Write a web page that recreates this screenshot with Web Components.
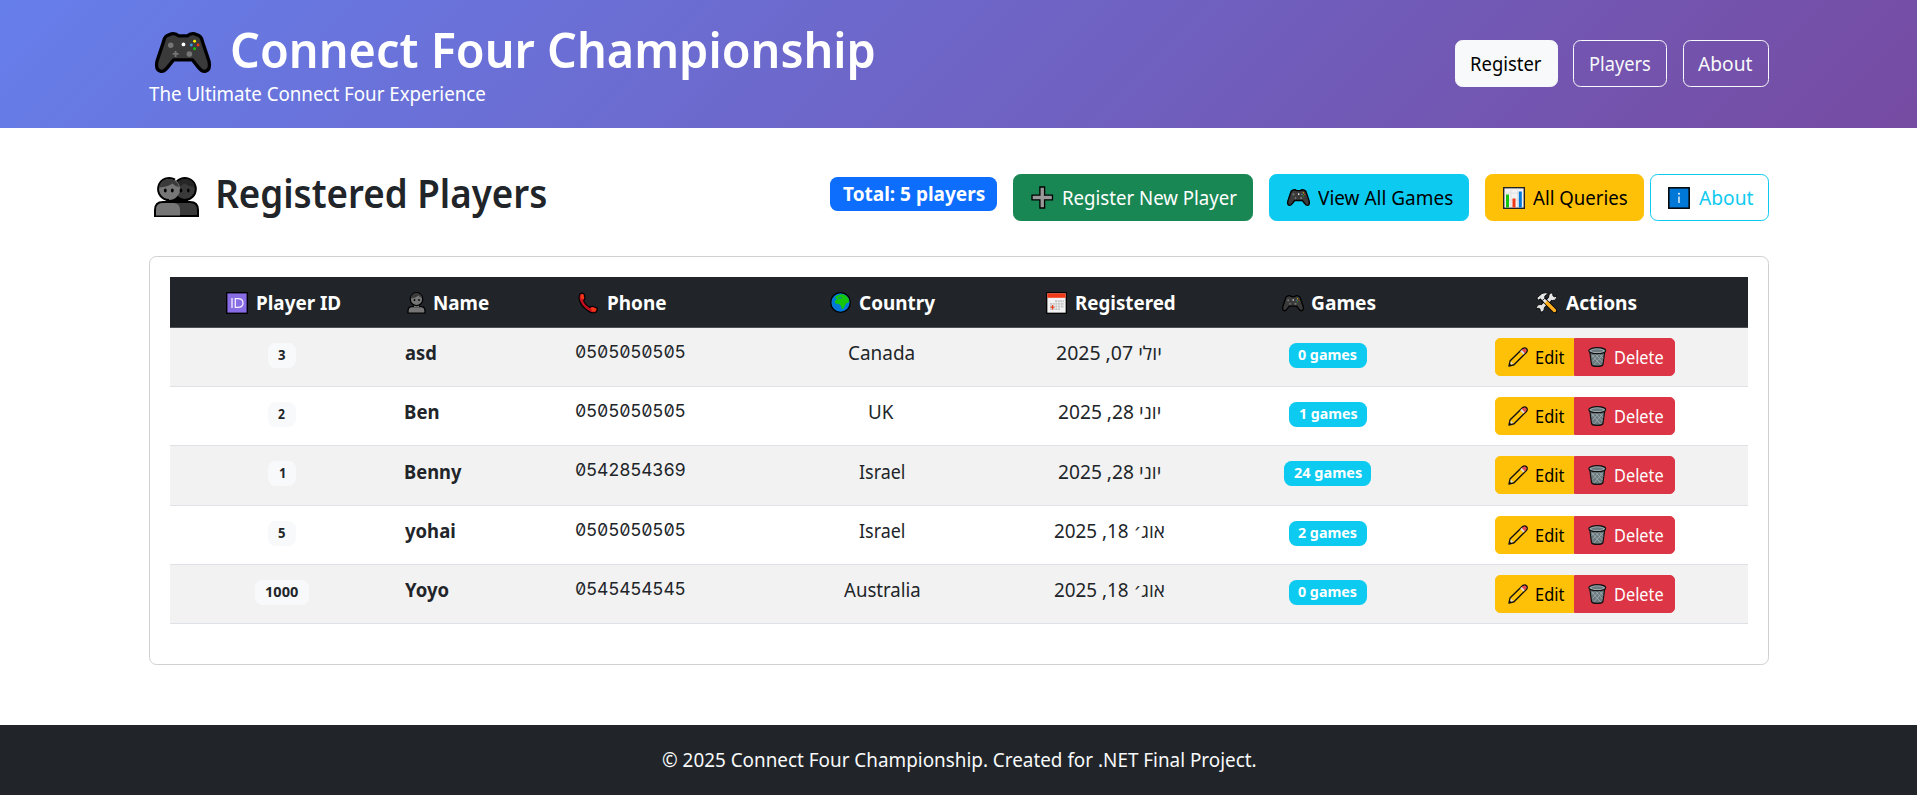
<!DOCTYPE html>
<html lang="en">
<head>
<meta charset="utf-8">
<title>Registered Players - Connect Four Championship</title>
<style>
html,body{margin:0;background:#fff}
body{font-family:"Noto Sans","Open Sans","DejaVu Sans",sans-serif;font-size:19.3px;line-height:30px;color:#212529}
</style>
</head>
<body>
<championship-app></championship-app>
<script>
/* Text run whose glyphs span exactly `w` pixels */
class FitText extends HTMLElement{
  connectedCallback(){
    if(!this.shadowRoot){
      this.attachShadow({mode:'open'}).innerHTML=`<style>:host{display:inline-block;white-space:nowrap;flex:none}span{display:inline-block;transform-origin:0 50%}</style><span><slot></slot></span>`;
    }
    const w=parseFloat(this.getAttribute('w')),s=getComputedStyle(this);
    const c=FitText.ctx||(FitText.ctx=document.createElement('canvas').getContext('2d'));
    c.font=`${s.fontWeight} ${s.fontSize} ${s.fontFamily}`;
    const m=c.measureText(this.textContent);
    const k=w/(m.actualBoundingBoxLeft+m.actualBoundingBoxRight);
    const sp=this.shadowRoot.querySelector('span');
    this.style.width=w+'px';
    sp.style.transform=`translateX(${m.actualBoundingBoxLeft*k}px) scaleX(${k})`;
  }
}

const ICONS={
pad:['0 0 57 42',`<path d="M14 3Q20 0 24 4H33Q37 0 43 3Q47 4 48 9L55 30Q57 39 51 40.300Q48 41 44 36L38 28.500H19L13 36Q9 41 6 40.300Q0 39 2 30L9 9Q10 4 14 3Z" fill="#3a3a3a" stroke="#000" stroke-width="3.400" stroke-linejoin="round"/><circle cx="16" cy="13.500" r="2.800" fill="#767676"/><circle cx="35" cy="22.500" r="2.900" fill="#767676"/><path d="M21 19.500v6M18 22.500h6" stroke="#767676" stroke-width="1.800"/><circle cx="29" cy="12.700" r="1.900" fill="#fff"/><circle cx="37" cy="13.300" r="1.500" fill="#3a96dd"/><circle cx="40.300" cy="9.500" r="1.500" fill="#fff100"/><circle cx="43.800" cy="13.300" r="1.500" fill="#f03a17"/><circle cx="40.300" cy="17.200" r="1.500" fill="#16c60c"/>`],
people:['0 0 45 40',`<path d="M1 39V33Q1 25 9 25H36Q44 25 44 33V39Z" fill="#3a3a3a" stroke="#000" stroke-width="2"/><path d="M12 20H34V25.500H12Z"/><circle cx="30.800" cy="12" r="11" fill="#3a3a3a" stroke="#000" stroke-width="2"/><path d="M21 10Q27 10 30 6.500Q34 9 40.500 10Q40 2 31 2Q23 2 21 10Z" fill="#262626"/><path d="M2 38.500V33Q2 26 9 26H20Q26 26.500 26 33V38.500Z" fill="#767676"/><circle cx="15" cy="12" r="11" fill="#767676"/><path d="M21 2.700A11 11 0 1 0 15 23" fill="none" stroke="#000" stroke-width="2"/><path d="M5 10.500Q14 10 18.500 6.500Q20.500 9 25 10Q23 1.900 15 1.900Q6.500 1.900 5 10.500Z" fill="#3a3a3a"/><ellipse cx="11.300" cy="13.500" rx="1.400" ry="1.900"/><ellipse cx="18.300" cy="13.500" rx="1.400" ry="1.900"/><ellipse cx="27" cy="13.500" rx="1.300" ry="1.900"/><ellipse cx="34.300" cy="13.500" rx="1.300" ry="1.900"/>`],
plus:['0 0 22 23',`<path d="M8.700 1H13.300V9.200H21V13.800H13.300V22H8.700V13.800H1V9.200H8.700Z" fill="#999" stroke="#000" stroke-width="1.300"/>`],
chart:['0 0 22 22',`<rect x=".7" y=".7" width="20.600" height="20.600" fill="#f2f2f2" stroke="#222" stroke-width="1.400"/><path d="M8 1.500V20M14.500 1.500V20M1.500 6H20.500M1.500 13H20.500" stroke="#ddd" stroke-width=".8"/><path d="M3 7.500h3V20.500H3z" fill="#16c60c"/><path d="M9.500 11.500h3v9h-3z" fill="#f03a17"/><path d="M15.800 4.500h3v16h-3z" fill="#0078d7"/>`],
info:['0 0 22 22',`<rect x=".8" y=".8" width="20.400" height="20.400" fill="#0078d7" stroke="#000" stroke-width="1.500"/><path d="M11 9.500V16" stroke="#fff" stroke-width="1.300"/><circle cx="11" cy="6.800" r=".95" fill="#fff"/>`],
id:['0 0 22 22',`<rect x=".7" y=".7" width="20.600" height="20.600" fill="#886ce4" stroke="#000" stroke-width="1.400"/><path d="M6 6V16M9.300 6.600H12Q17 6.600 17 11T12 15.400H9.300Z" stroke="#f4f0ff" stroke-width="1.300" fill="none"/>`],
person:['0 0 19 22',`<path d="M1 21.200V19Q1 14.600 5 14.600H14Q18 14.600 18 19V21.200Z" fill="#767676" stroke="#000" stroke-width="1.300"/><path d="M7 12h5v3H7z" fill="#767676"/><ellipse cx="9.500" cy="7.200" rx="6.200" ry="6.500" fill="#767676" stroke="#000" stroke-width="1.300"/><path d="M3.700 6.500Q9 6 11.500 3.600Q12.500 5.500 15.300 6Q14 1.300 9.500 1.300Q4.500 1.300 3.700 6.500Z" fill="#3a3a3a"/><circle cx="7.500" cy="8" r=".9"/><circle cx="12" cy="8" r=".9"/>`],
phone:['0 0 21 22',`<path d="M2 2Q4 .5 6 1.500Q7.500 4.500 7 7Q5.500 8 6 9.500Q8 13.500 12 15.500Q13.500 14 15 14.300L19.500 16Q20.500 18.500 18 20.500Q14 22 9 18Q3 13.500 1.300 8Q.5 4.500 2 2Z" fill="#c50f1f" stroke="#000" stroke-width="1.200"/><path d="M3 2.500Q5 1.700 5.600 3L6.300 6.500L3.700 7.500Q2 5 3 2.500ZM13 16.300L15.500 15.300L18.800 16.800Q19 18.500 17.500 19.600L14.500 19.500Z" fill="#f03a17"/>`],
globe:['0 0 21 21',`<circle cx="10.500" cy="10.500" r="9.800" fill="#0078d7" stroke="#000" stroke-width="1.300"/><path d="M5 5.500Q8 2 13 2.200Q16.500 3 18.500 6.500Q19.800 10 18 11Q16 10.500 15.500 12.500Q14.500 15 13 17Q11 17.500 11.200 14.500Q10.500 12.500 8.500 12Q5 12 4.600 9.500Q5.500 8 7.500 7.500Q6 7 5 5.500Z" fill="#16c60c"/><path d="M8 6.300Q10 5 12 6.200M2.500 8L4 6" stroke="#0078d7" stroke-width=".9" fill="none"/>`],
cal:['0 0 21 22',`<rect x=".7" y=".7" width="19.600" height="20.600" fill="#f2f2f2" stroke="#000" stroke-width="1.300"/><path d="M1.300 1.300H19.700V5.800H1.300Z" fill="#f03a17"/><path d="M9 9.300H18M4 11.900H18M4 14.500H18M4 17.100H14" stroke="#c4c4c4" stroke-width="1.900" stroke-dasharray="2 .7"/><path d="M6.500 13V17.500M4.500 15.200H8.500" stroke="#f03a17" stroke-width="1.100"/>`],
tools:['0 0 21 21',`<path d="M4.500 16.500L16 5" stroke="#000" stroke-width="5"/><path d="M12.800 6Q12 1.500 16.500 .8L17 4L19 5L20.500 3.500Q21 8.500 16.500 8.500ZM8.200 15Q9 19.500 4.500 20.200L4 17L2 16L.5 17.500Q0 12.500 4.500 12.500Z" fill="#e6e6e6" stroke="#000" stroke-width=".8"/><path d="M4.500 16.500L16 5" stroke="#e6e6e6" stroke-width="3.400"/><path d="M6 6L18.800 18.800" stroke="#000" stroke-width="4.800" stroke-linecap="round"/><path d="M10 10L18.500 18.500" stroke="#ffb020" stroke-width="3.400" stroke-linecap="round"/><path d="M6 6L10 10" stroke="#e6e6e6" stroke-width="3"/><path d="M.8 6L6 1.500Q9 .3 12.500 1.300L8.800 4L8.800 6.300L6.300 8.600L4.300 6.800L2.500 8.200Z" fill="#e6e6e6" stroke="#000" stroke-width=".8"/>`],
pencil:['0 0 20 20',`<path d="M1 19L2.200 13.700L14.500 1.700Q17 .2 18.500 1.700Q20 3.500 18.300 5.500L6 17.700Z" fill="#ffc107" stroke="#111" stroke-width="1.400" stroke-linejoin="round"/><path d="M13.700 3L15.200 1.900Q17 1 18 2.200Q19 3.800 17.700 5.300L16.700 6.200Z" fill="#e74856"/><path d="M12.200 4.200L13.700 3L16.700 6.200L15.500 7.500ZM2.800 14.500L5.300 17L2.300 17.800Z" fill="#ddd"/><path d="M1 19L1.600 16.500L3.500 18.300Z" fill="#111"/>`],
trash:['0 0 19 20',`<path d="M1.800 4.500L3.600 17.500Q4 19.300 9.500 19.300T15.400 17.500L17.200 4.500Z" fill="#69797e" stroke="#111" stroke-width="1.200"/><path d="M4 8L13 18M7.500 7L14.800 15M11.500 7L15.500 11.500M15 8L6 18M11.500 7L4.500 14.500M7.500 7L4 10.500" stroke="#a5b0b4" stroke-width=".8"/><ellipse cx="9.500" cy="3.700" rx="8.700" ry="3" fill="#9aa8ad" stroke="#111" stroke-width="1.200"/><ellipse cx="9.500" cy="3.700" rx="6.200" ry="1.400" fill="#69797e"/>`]
};
class EmojiIcon extends HTMLElement{
  connectedCallback(){
    if(this.shadowRoot)return;
    const [vb,body]=ICONS[this.getAttribute('name')];
    this.attachShadow({mode:'open'}).innerHTML=`<style>:host{display:inline-block;flex:none;width:${this.getAttribute('w')}px;height:${this.getAttribute('h')}px}svg{display:block;width:100%;height:100%;overflow:visible}</style><svg viewBox="${vb}" preserveAspectRatio="none" aria-hidden="true">${body}</svg>`;
  }
}

class AppButton extends HTMLElement{
  connectedCallback(){
    if(this.shadowRoot)return;
    this.attachShadow({mode:'open'}).innerHTML=`<style>
    :host{display:flex;align-items:center;box-sizing:border-box;height:47px;border:1px solid var(--line,transparent);border-radius:7.5px;flex:none;background:var(--fill,transparent);color:var(--ink,#000);cursor:pointer}
    :host([kind=light]){--fill:#f8f9fa;--line:#f8f9fa}
    :host([kind=outline]){--line:#f8f9fa;--ink:#f8f9fa}
    :host([kind=success]){--fill:#198754;--line:#198754;--ink:#fff}
    :host([kind=info]){--fill:#0dcaf0;--line:#0dcaf0}
    :host([kind=warning]){--fill:#ffc107;--line:#ffc107}
    :host([kind=danger]){--fill:#dc3545;--line:#dc3545;--ink:#fff}
    :host([kind=outline-info]){--line:#0dcaf0;--ink:#0dcaf0}
    :host([small]){height:38px;font-size:17.6px;border-radius:5px}
    :host([small][side=left]){border-radius:5px 0 0 5px}
    :host([small][side=right]){border-radius:0 5px 5px 0}
    </style><slot></slot>`;
  }
}

class AppBadge extends HTMLElement{
  connectedCallback(){
    if(this.shadowRoot)return;
    this.attachShadow({mode:'open'}).innerHTML=`<style>
    :host{display:flex;justify-content:center;box-sizing:border-box;height:25px;line-height:23px;border-radius:7.5px;font-weight:700;font-size:15px;flex:none;background:#f8f9fa;color:#212529}
    :host([kind=info]){background:#0dcaf0;color:#fff}
    :host([kind=primary]){background:#0d6efd;color:#fff;height:34px;line-height:34px;font-size:19.300px}
    </style><slot></slot>`;
  }
}

class SiteHeader extends HTMLElement{
  connectedCallback(){
    this.attachShadow({mode:'open'}).innerHTML=`<style>
    :host{display:block;background:linear-gradient(135deg,#667eea 0%,#764ba2 100%);color:#fff}
    .in{box-sizing:border-box;width:1620px;height:128px;margin:0 auto;padding-top:19px;display:flex;justify-content:space-between;align-items:flex-start}
    h1{margin:0;height:60px;display:flex;font-size:49.500px;font-weight:600;line-height:60px}
    h1 emoji-icon{margin:12.500px 21px 0 6.500px}
    .sub{display:block}
    nav{display:flex;margin-top:21px}
    </style><div class="in"><div><h1><emoji-icon name="pad" w="56" h="41"></emoji-icon><fit-text w="642">Connect Four Championship</fit-text></h1><div class="sub"><fit-text w="336">The Ultimate Connect Four Experience</fit-text></div></div>
    <nav><app-button kind="light" style="width:103px;padding-left:15.500px"><fit-text w="70.500">Register</fit-text></app-button>
    <app-button kind="outline" style="width:94px;margin-left:15px;padding-left:16.500px"><fit-text w="60.500">Players</fit-text></app-button>
    <app-button kind="outline" style="width:86px;margin-left:16px;padding-left:14.500px"><fit-text w="54.500">About</fit-text></app-button></nav></div>`;
  }
}

class PageToolbar extends HTMLElement{
  connectedCallback(){
    this.attachShadow({mode:'open'}).innerHTML=`<style>
    :host{display:flex;justify-content:space-between;align-items:flex-start;height:128px}
    h2{margin:41px 0 0;display:flex;font-size:39.300px;font-weight:600;line-height:48px}
    h2 emoji-icon{margin:7.500px 18.500px 0 5.500px}
    .r{display:flex;align-items:flex-start;padding-top:46px}
    </style><h2><emoji-icon name="people" w="45" h="40"></emoji-icon><fit-text w="328">Registered Players</fit-text></h2>
    <div class="r"><app-badge kind="primary" style="width:167px;margin:3px 16px 0 0;padding-left:1.500px"><fit-text w="141.500">Total: 5 players</fit-text></app-badge>
    <app-button kind="success" style="width:240px;margin-right:16px;padding-left:17.500px"><emoji-icon name="plus" w="22.500" h="23" style="margin-right:9px"></emoji-icon><fit-text w="174">Register New Player</fit-text></app-button>
    <app-button kind="info" style="width:200px;margin-right:16px;padding-left:17.500px"><emoji-icon name="pad" w="23" h="17" style="margin-right:8px"></emoji-icon><fit-text w="135">View All Games</fit-text></app-button>
    <app-button kind="warning" style="width:159px;margin-right:6px;padding-left:17px"><emoji-icon name="chart" w="22" h="22" style="margin-right:8px"></emoji-icon><fit-text w="94.500">All Queries</fit-text></app-button>
    <app-button kind="outline-info" style="width:119px;padding-left:17.500px"><emoji-icon name="info" w="22" h="22" style="margin-right:8.500px"></emoji-icon><fit-text w="54.500">About</fit-text></app-button></div>`;
  }
}

const GRID='display:grid;grid-template-columns:225.500px 170px 215px 204px 250px 188px 1fr;';
class TableHead extends HTMLElement{
  connectedCallback(){
    const c=[['id',22,22,9,84,'Player ID',56.5],['person',19,22,8.3,54.7,'Name',12],['phone',20.5,22,9.8,58,'Phone',12.5],['globe',21,21,9.3,76,'Country',49.5],['cal',21,22,9,98.5,'Registered',61.5],['pad',22,16.5,8.5,63.5,'Games',47.5],['tools',21,21,9,70.5,'Actions',113.8]];
    this.attachShadow({mode:'open'}).innerHTML=`<style>:host{${GRID}height:51px;box-sizing:border-box;background:#212529;border-bottom:1px solid #4d5154;color:#fff;font-weight:700}
    div{display:flex;align-items:center;height:51.500px}</style>`+c.map(([n,w,h,g,tw,t,p])=>`<div style="padding-left:${p}px"><emoji-icon name="${n}" w="${w}" h="${h}" style="margin-right:${g}px"></emoji-icon><fit-text w="${tw}">${t}</fit-text></div>`).join('');
  }
}

class PlayerRow extends HTMLElement{
  connectedCallback(){
    const [id,idW,bw,name,nw,phone,country,cw,date,dw,games,gw,gb]=JSON.parse(this.getAttribute('data'));
    this.attachShadow({mode:'open'}).innerHTML=`<style>:host{${GRID}height:59.200px;box-sizing:border-box;border-bottom:1px solid #dee2e6;background:var(--stripe,transparent)}
    .c{display:flex;justify-content:center;align-items:flex-start;padding-top:10.200px}
    .l{justify-content:flex-start}.n{font-weight:700;padding-left:10px}
    .b{padding-top:15px}.i{padding-right:1px}
    .p{padding:9px 0 0 10px;font:17.500px/30px Inter,"DejaVu Sans Mono",monospace;font-feature-settings:"zero","tnum";letter-spacing:-.3px}
    .a{padding-top:10px}
    </style>
    <div class="c b i"><app-badge style="width:${bw}px"><fit-text w="${idW}">${id}</fit-text></app-badge></div>
    <div class="c l n"><fit-text w="${nw}">${name}</fit-text></div>
    <div class="c l p">${phone}</div>
    <div class="c i"><fit-text w="${cw}">${country}</fit-text></div>
    <div class="c"><fit-text w="${dw}">${date}</fit-text></div>
    <div class="c b i"><app-badge kind="info" style="width:${gb}px"><fit-text w="${gw}">${games} games</fit-text></app-badge></div>
    <div class="c a"><app-button small side="left" kind="warning" style="width:79px;padding-left:12.500px"><emoji-icon name="pencil" w="20" h="20" style="margin-right:7.500px"></emoji-icon><fit-text w="28">Edit</fit-text></app-button><app-button small side="right" kind="danger" style="width:101px;padding-left:13px"><emoji-icon name="trash" w="18.500" h="20" style="margin-right:8.500px"></emoji-icon><fit-text w="48.700">Delete</fit-text></app-button></div>`;
  }
}

class PlayersCard extends HTMLElement{
  connectedCallback(){
    const rows=[
      ["3",7,27.5,"asd",30.6,"0505050505","Canada",65.4,"יולי 07, 2025",105.2,"0",58.5,78],
      ["2",7.3,27.5,"Ben",34,"0505050505","UK",24.4,"יוני 28, 2025",102.6,"1",58,78],
      ["1",6,27.5,"Benny",57.4,"0542854369","Israel",45.5,"יוני 28, 2025",102.6,"24",67.7,87],
      ["5",7,27.5,"yohai",50,"0505050505","Israel",45.5,"אוג׳ 18, 2025",110.5,"2",58.5,78],
      ["1000",33.7,53.5,"Yoyo",44,"0545454545","Australia",76,"אוג׳ 18, 2025",110.5,"0",58.5,78]];
    this.attachShadow({mode:'open'}).innerHTML=`<style>:host{display:block;box-sizing:border-box;height:409px;border:1px solid #d0d0d1;border-radius:7.500px;padding:20px}player-row:nth-of-type(odd){--stripe:#f2f2f2}</style><table-head></table-head>`+rows.map(r=>`<player-row data='${JSON.stringify(r)}'></player-row>`).join('');
  }
}

class SiteFooter extends HTMLElement{
  connectedCallback(){
    this.attachShadow({mode:'open'}).innerHTML=`<style>:host{display:flex;justify-content:center;box-sizing:border-box;height:70px;padding-top:20px;background:#212529;color:#f8f9fa}</style><fit-text w="593.500">© 2025 Connect Four Championship. Created for .NET Final Project.</fit-text>`;
  }
}

class ChampionshipApp extends HTMLElement{
  connectedCallback(){
    this.attachShadow({mode:'open'}).innerHTML=`<style>:host{display:block;height:795px;overflow:hidden}main{display:block;width:1620px;height:597px;margin:0 auto}</style><site-header></site-header><main><page-toolbar></page-toolbar><players-card></players-card></main><site-footer></site-footer>`;
  }
}
customElements.define('fit-text',FitText);
customElements.define('emoji-icon',EmojiIcon);
customElements.define('app-button',AppButton);
customElements.define('app-badge',AppBadge);
customElements.define('site-header',SiteHeader);
customElements.define('page-toolbar',PageToolbar);
customElements.define('table-head',TableHead);
customElements.define('player-row',PlayerRow);
customElements.define('players-card',PlayersCard);
customElements.define('site-footer',SiteFooter);
customElements.define('championship-app',ChampionshipApp);
</script>
</body>
</html>
